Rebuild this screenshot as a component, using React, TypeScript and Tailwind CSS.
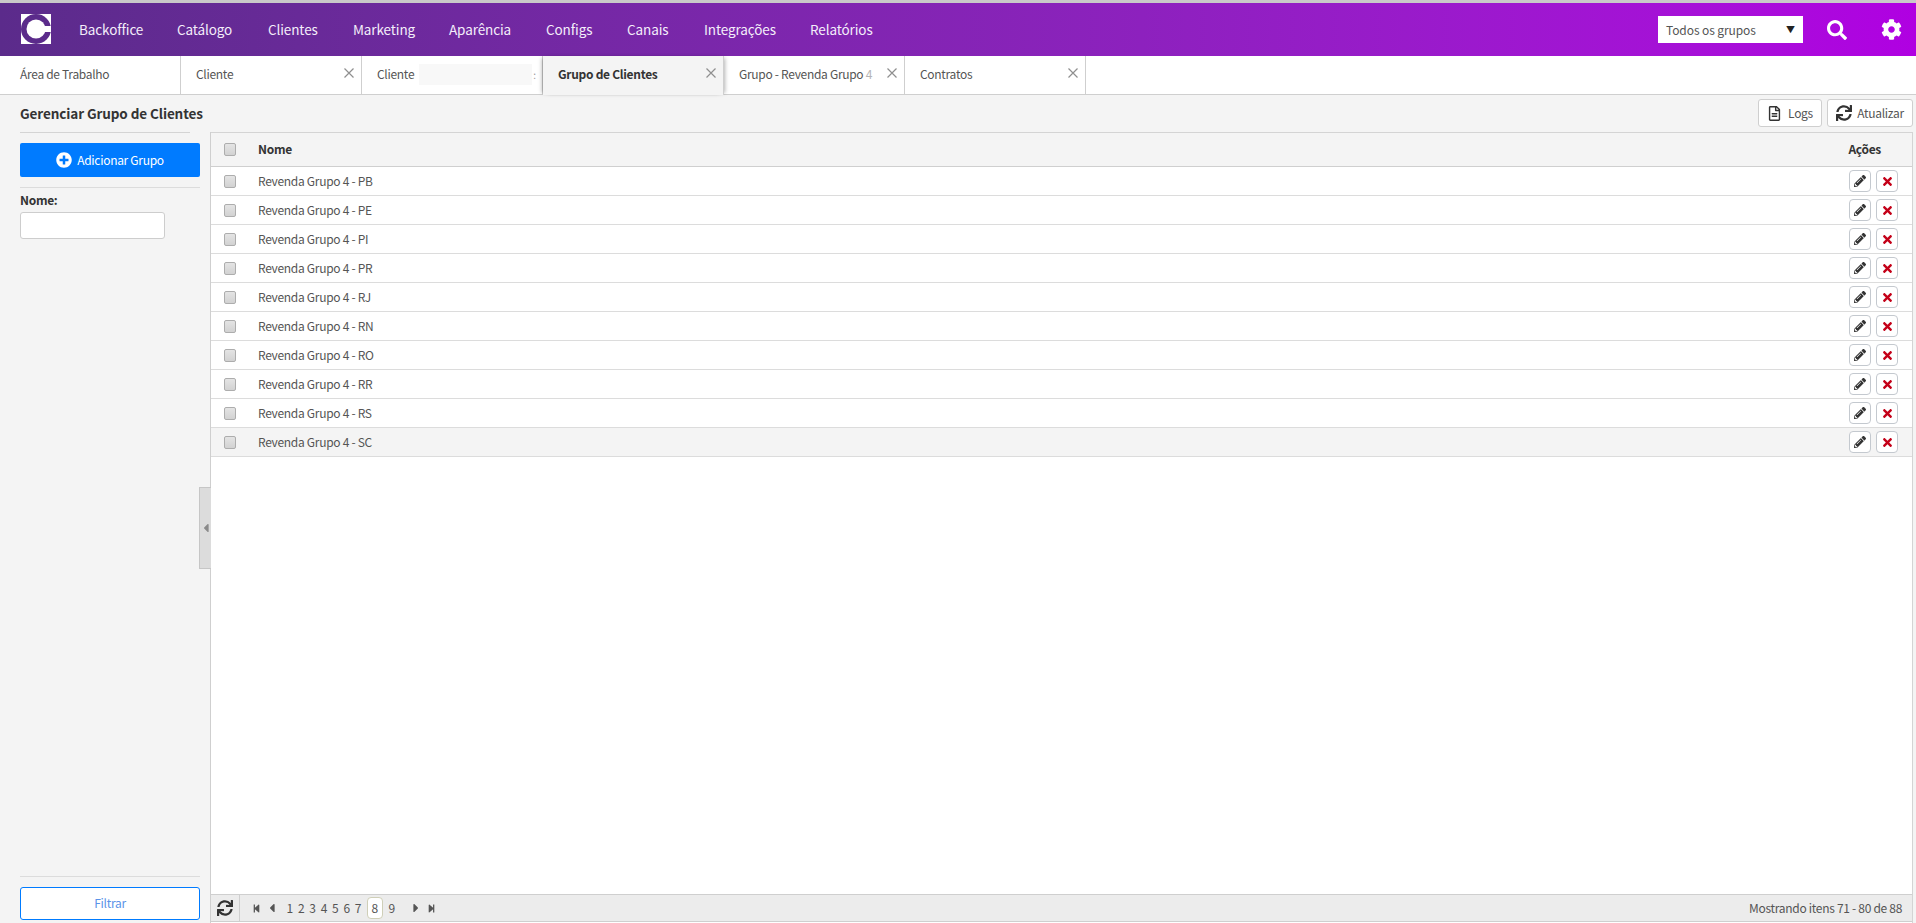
import React from "react";
import {
  FaCog,
  FaPencilAlt,
  FaPlusCircle,
  FaRegFileAlt,
  FaSearch,
  FaStepBackward,
  FaStepForward,
  FaSync,
  FaTimes,
  FaCaretLeft,
  FaCaretRight,
} from "react-icons/fa";

const menu = [
  { label: "Backoffice", width: "w-[98px]" },
  { label: "Catálogo", width: "w-[91px]" },
  { label: "Clientes", width: "w-[85px]" },
  { label: "Marketing", width: "w-[96px]" },
  { label: "Aparência", width: "w-[97px]" },
  { label: "Configs", width: "w-[81px]" },
  { label: "Canais", width: "w-[77px]" },
  { label: "Integrações", width: "w-[106px]" },
  { label: "Relatórios", width: "w-[80px]" },
];

const rows = ["PB", "PE", "PI", "PR", "RJ", "RN", "RO", "RR", "RS", "SC"];

function Logo() {
  return (
    <svg width="30" height="30" viewBox="0 0 30 30" className="shrink-0">
      <rect width="30" height="30" fill="#fff" />
      <circle cx="15" cy="15" r="15" fill="#5b2b8b" />
      <circle cx="15" cy="15" r="9.5" fill="#fff" />
      <rect x="15" y="12" width="15" height="6" fill="#fff" />
    </svg>
  );
}

function TabClose({ className = "" }: { className?: string }) {
  return (
    <svg width="12" height="12" viewBox="0 0 12 12" className={className}>
      <path d="M1.5 1.5l9 9M10.5 1.5l-9 9" stroke="#8f8f8f" strokeWidth="1.2" fill="none" />
    </svg>
  );
}

function Tab({ label, active, children }: { label?: string; active?: boolean; children?: React.ReactNode }) {
  return (
    <div
      className={
        active
          ? "relative z-10 flex h-[39px] w-[181px] items-center justify-between border-r border-[#cfcfcf] bg-[#f4f4f4] pb-[3px] pl-[15px] pr-[6px] font-bold text-[#333] shadow-[-3px_0_4px_-2px_rgba(0,0,0,0.3),3px_0_4px_-2px_rgba(0,0,0,0.3)]"
          : "flex h-[38px] w-[181px] items-center justify-between border-r border-[#cfcfcf] pb-[2px] pl-[15px] pr-[6px] text-[#555]"
      }
    >
      {children ?? <span className="whitespace-nowrap">{label}</span>}
      <TabClose className="mb-[2px] shrink-0" />
    </div>
  );
}

function Checkbox({ className = "" }: { className?: string }) {
  return (
    <input
      type="checkbox"
      className={`h-[13px] w-[12px] appearance-none rounded-[2px] border border-[#adadad] bg-gradient-to-b from-[#e4e4e4] to-[#d2d2d2] ${className}`}
    />
  );
}

export default function App() {
  return (
    <div className="flex h-[923px] w-[1916px] flex-col overflow-hidden border-t-[3px] border-[#c9c9c9] bg-white font-['Noto_Sans_CJK_SC','Liberation_Sans',sans-serif] text-[12px] tracking-[-0.3px] text-[#555]">
      {/* top bar */}
      <header className="flex h-[53px] shrink-0 items-center bg-gradient-to-r from-[#5b2b8b] to-[#b000e2] pl-[21px]">
        <div className="mb-[1px]">
          <Logo />
        </div>
        <nav className="ml-[28px] flex items-center text-[13.5px] tracking-[-0.1px] text-[#f4eefa]">
          {menu.map((m) => (
            <span key={m.label} className={`${m.width} whitespace-nowrap`}>
              {m.label}
            </span>
          ))}
        </nav>
        <div className="ml-auto flex items-center">
          <div className="flex h-[27px] w-[145px] items-center justify-between bg-white px-[8px] tracking-[-0.1px] text-[#555]">
            <span>Todos os grupos</span>
            <span className="text-[9px] text-[#222]">▼</span>
          </div>
          <FaSearch className="ml-[24px] text-[20px] text-white" />
          <FaCog className="ml-[34px] mr-[14px] text-[21px] text-white" />
        </div>
      </header>

      {/* tabs */}
      <div className="flex h-[39px] shrink-0 border-b border-[#cfcfcf] bg-white">
        <div className="flex h-[38px] w-[181px] items-center border-r border-[#cfcfcf] pb-[2px] pl-[20px] text-[#555]">
          Área de Trabalho
        </div>
        <Tab label="Cliente" />
        <div className="flex h-[38px] w-[181px] items-center border-r border-[#cfcfcf] pb-[2px] pl-[15px] text-[#555]">
          <span>Cliente</span>
          <span className="ml-[5px] h-[21px] w-[113px] bg-[#f8f8f8]" />
          <span className="ml-[1px] text-[10px] text-[#9a9a9a]">:</span>
        </div>
        <Tab label="Grupo de Clientes" active />
        <Tab>
          <span className="whitespace-nowrap">
            Grupo - Revenda Grupo <span className="text-[#b5b5b5]">4</span>
          </span>
        </Tab>
        <Tab label="Contratos" />
      </div>

      {/* title bar */}
      <div className="flex h-[37px] shrink-0 items-center justify-between bg-[#f4f4f4] pl-[20px] pr-[3px]">
        <h1 className="text-[13.5px] font-bold tracking-[-0.1px] text-[#333]">Gerenciar Grupo de Clientes</h1>
        <div className="mt-[-1px] flex gap-[5px]">
          <button className="flex h-[28px] w-[64px] items-center justify-center gap-[6px] rounded-[3px] border border-[#cfcfcf] bg-white text-[#555]">
            <FaRegFileAlt className="text-[15px] text-[#333]" />
            Logs
          </button>
          <button className="flex h-[28px] w-[86px] items-center justify-center gap-[5px] rounded-[3px] border border-[#cfcfcf] bg-white text-[#555]">
            <FaSync className="text-[16px] text-[#333]" />
            Atualizar
          </button>
        </div>
      </div>

      <div className="flex min-h-0 flex-1 bg-[#f4f4f4]">
        {/* filter sidebar */}
        <aside className="relative flex w-[211px] shrink-0 flex-col border-r border-[#cfcfcf] px-[20px]">
          <div className="border-t border-[#d4d4d4] pt-[10px]">
            <button className="flex h-[34px] w-[180px] items-center justify-center gap-[5px] rounded-[2px] bg-[#007bff] text-white">
              <FaPlusCircle className="text-[16px]" />
              Adicionar Grupo
            </button>
          </div>
          <div className="mt-[10px] w-[180px] border-t border-[#dcdcdc] pt-[3px]">
            <label className="block font-bold leading-[18px] text-[#333]">Nome:</label>
            <input className="mt-[3px] block h-[27px] w-[145px] rounded-[3px] border border-[#cdcdcd] bg-white" />
          </div>
          <div className="mb-[3px] mt-auto w-[180px] border-t border-[#dcdcdc] pt-[10px]">
            <button className="h-[33px] w-[180px] rounded-[3px] border border-[#007bff] bg-white pb-[2px] text-[#5a93e8]">
              Filtrar
            </button>
          </div>
          <div className="absolute right-[-1px] top-[355px] flex h-[82px] w-[12px] items-center justify-center border border-r-0 border-[#c6c6c6] bg-[#dcdcdc]">
            <FaCaretLeft className="shrink-0 text-[14px] text-[#8a8a8a]" />
          </div>
        </aside>

        {/* grid */}
        <main className="mr-[3px] flex min-w-0 flex-1 flex-col border-r border-t border-[#d4d4d4] bg-white">
          <div className="flex h-[34px] shrink-0 items-center border-b border-[#cfcfcf] bg-[#f4f4f4] font-bold text-[#333]">
            <Checkbox className="ml-[13px] mb-[1px]" />
            <span className="ml-[22px] flex-1 pb-[2px]">Nome</span>
            <span className="mr-[31px] pb-[2px]">Ações</span>
          </div>

          <div className="flex-1">
            {rows.map((uf) => (
              <div
                key={uf}
                className={
                  uf === "SC"
                    ? "flex h-[29px] items-center border-b border-[#dcdcdc] bg-[#f4f4f4]"
                    : "flex h-[29px] items-center border-b border-[#dcdcdc]"
                }
              >
                <Checkbox className="ml-[13px]" />
                <span className="ml-[22px] flex-1">Revenda Grupo 4 - {uf}</span>
                <div className="mr-[14px] flex gap-[5px]">
                  <button className="flex h-[22px] w-[22px] items-center justify-center rounded-[4px] border border-[#c4c9cf] bg-white">
                    <FaPencilAlt className="text-[12px] text-[#333]" />
                  </button>
                  <button className="flex h-[22px] w-[22px] items-center justify-center rounded-[4px] border border-[#c4c9cf] bg-white">
                    <FaTimes className="text-[13px] text-[#c40018]" />
                  </button>
                </div>
              </div>
            ))}
          </div>

          {/* pager */}
          <div className="mb-[1px] flex h-[28px] shrink-0 items-center border-y border-[#cfcfcf] bg-[#ececec]">
            <div className="flex h-full w-[29px] shrink-0 items-center justify-center border-r border-[#cfcfcf]">
              <FaSync className="text-[16px] text-[#333]" />
            </div>
            <div className="ml-[11.5px] flex items-center text-[#555]">
              <FaStepBackward className="text-[9px] text-[#555]" />
              <FaCaretLeft className="ml-[4.5px] text-[14px] text-[#555]" />
              <div className="ml-[5px] flex items-center">
                {[1, 2, 3, 4, 5, 6, 7].map((n) => (
                  <span key={n} className="w-[11.4px] pb-[1px] text-center">
                    {n}
                  </span>
                ))}
                <span className="ml-[3px] flex h-[22px] w-[16px] items-center justify-center rounded-[4px] border border-[#cfcfb8] bg-white">
                  8
                </span>
                <span className="ml-[3px] w-[12px] pb-[1px] text-center">9</span>
              </div>
              <FaCaretRight className="ml-[11px] text-[14px] text-[#555]" />
              <FaStepForward className="ml-[4.5px] text-[9px] text-[#555]" />
            </div>
            <span className="ml-auto mr-[10px] pb-[1px] text-[#555]">Mostrando itens 71 - 80 de 88</span>
          </div>
        </main>
      </div>
    </div>
  );
}
